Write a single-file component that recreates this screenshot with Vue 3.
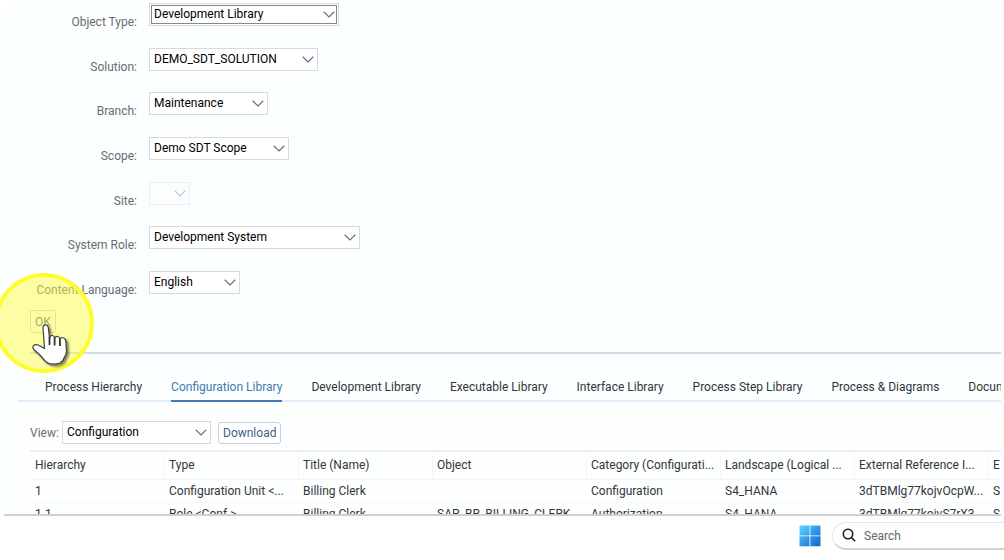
<script setup>
import { ref } from 'vue'

const fields = [
  { id: 'object-type', label: 'Object Type:', value: 'Development Library', width: 190, focused: true },
  { id: 'solution', label: 'Solution:', value: 'DEMO_SDT_SOLUTION', width: 169 },
  { id: 'branch', label: 'Branch:', value: 'Maintenance', width: 119 },
  { id: 'scope', label: 'Scope:', value: 'Demo SDT Scope', width: 140 },
  { id: 'site', label: 'Site:', value: '', width: 41, disabled: true },
  { id: 'system-role', label: 'System Role:', value: 'Development System', width: 211 },
  { id: 'content-language', label: 'Content Language:', value: 'English', width: 91 },
]

const tabs = [
  'Process Hierarchy',
  'Configuration Library',
  'Development Library',
  'Executable Library',
  'Interface Library',
  'Process Step Library',
  'Process & Diagrams',
  'Documents',
]
const activeTab = ref('Configuration Library')

const columns = [
  'Hierarchy',
  'Type',
  'Title (Name)',
  'Object',
  'Category (Configurati...',
  'Landscape (Logical ...',
  'External Reference I...',
  'E',
]
const rows = [
  ['1', 'Configuration Unit <...', 'Billing Clerk', '', 'Configuration', 'S4_HANA', '3dTBMlg77kojvOcpW...', 'S'],
  ['1.1', 'Role <Conf.>', 'Billing Clerk', 'SAP_BR_BILLING_CLERK', 'Authorization', 'S4_HANA', '3dTBMlg77kojvS7rX3...', 'S'],
]
</script>

<template>
  <div class="screen">
    <main class="app">
      <form class="filters" @submit.prevent>
        <div class="fields">
          <div v-for="f in fields" :key="f.id" class="field">
            <label :for="f.id">{{ f.label }}</label>
            <div class="picker" :class="{ focused: f.focused, disabled: f.disabled }" :style="{ width: f.width + 'px' }">
              <select :id="f.id" :disabled="f.disabled">
                <option>{{ f.value }}</option>
              </select>
              <svg class="chevron" viewBox="0 0 12 7" aria-hidden="true"><path d="M.7.8 6 6 11.3.8" /></svg>
            </div>
          </div>
        </div>
        <button class="ok" type="submit">OK</button>
        <div class="click-mark" aria-hidden="true">
          <svg class="hand" viewBox="0 0 38 42">
            <path class="outline" d="M11 4.500Q11.200 1.800 13.500 1.800Q16 1.800 16.300 4.500L17.500 15Q18.500 12 20.500 12.500Q22.300 12.800 22.600 15.300Q23.800 12.800 25.800 13.500Q27.600 14 27.900 16.300Q29.500 13.800 31.800 15Q34 16 34 20L34.500 28Q34.500 31 32.500 34Q31.500 38 28 40Q19 43 13.500 38.500L8 32L1.800 26.500Q.2 24.500 1.300 22.800Q3 20.800 6 22L12.500 25.500Z" />
            <path class="line" d="M17.500 14v8M22.600 15v7.500M27.900 16v7" />
          </svg>
        </div>
      </form>

      <section class="library">
        <nav class="tabs">
          <a v-for="t in tabs" :key="t" href="#" :class="{ active: t === activeTab }" @click.prevent="activeTab = t">{{ t }}</a>
        </nav>
        <div class="panel">
          <div class="toolbar">
            <label for="view">View:</label>
            <div class="picker view">
              <select id="view"><option>Configuration</option></select>
              <svg class="chevron" viewBox="0 0 12 7" aria-hidden="true"><path d="M.7.8 6 6 11.3.8" /></svg>
            </div>
            <button class="download" type="button">Download</button>
          </div>
          <table>
            <colgroup>
              <col v-for="(c, i) in columns" :key="c" :class="{ wide: i === 3 }" />
            </colgroup>
            <thead>
              <tr><th v-for="c in columns" :key="c" scope="col">{{ c }}</th></tr>
            </thead>
            <tbody>
              <tr v-for="r in rows" :key="r[0]"><td v-for="(cell, i) in r" :key="i">{{ cell }}</td></tr>
            </tbody>
          </table>
        </div>
      </section>
    </main>

    <footer class="taskbar">
      <button class="start" type="button" aria-label="Start">
        <svg viewBox="0 0 22 22">
          <defs>
            <linearGradient id="tile" x1="0" y1="0" x2="22" y2="22" gradientUnits="userSpaceOnUse">
              <stop offset="0" stop-color="#5fdcff" />
              <stop offset=".5" stop-color="#3299e6" />
              <stop offset="1" stop-color="#1560cf" />
            </linearGradient>
          </defs>
          <path fill="url(#tile)" d="M1 .5h9.500v10H.5V1ZM11.300.5H21l.5.5v9.500H11.300ZM.5 11.300h10v10H1l-.5-.5ZM11.300 11.300h10.200v9.500l-.5.5h-9.700Z" />
        </svg>
      </button>
      <div class="search">
        <svg viewBox="0 0 14 14" aria-hidden="true"><circle cx="6" cy="6" r="4.700" /><path d="m9.500 9.500 3.700 3.700" /></svg>
        <input type="text" placeholder="Search" aria-label="Search" />
      </div>
    </footer>
  </div>
</template>

<style>
body {
  background: #fff;
  overflow: hidden;
}
</style>

<style scoped>
.screen {
  display: flex;
  flex-direction: column;
  height: 100vh;
  box-sizing: border-box;
  padding: 3px 3px 5px 4px;
  overflow: hidden;
  color: #32363a;
  font-family: Roboto, "Liberation Sans", sans-serif;
  font-size: 12px;
  line-height: 16px;
}
button,
select,
input {
  margin: 0;
  font: inherit;
}
.app {
  flex: 1;
  min-height: 0;
  display: flex;
  flex-direction: column;
  background: #fbffff;
  border-bottom: 2px solid #cfcfd2;
  border-top-left-radius: 6px;
}
.filters {
  position: relative;
  flex: none;
  margin-left: 26px;
  padding-bottom: 19px;
  border-bottom: 2px solid #d5d9e1;
}
.fields {
  display: flex;
  flex-direction: column;
  justify-content: space-between;
  min-height: 291px;
}
.field {
  display: grid;
  grid-template-columns: 107px 1fr;
  column-gap: 12px;
}
.field label {
  padding-top: 11px;
  height: 12px;
  text-align: right;
  color: #6a6d70;
}
.picker {
  position: relative;
  height: 23px;
}
.picker select {
  display: block;
  width: 100%;
  height: 100%;
  box-sizing: border-box;
  padding: 0 20px 1px 4px;
  appearance: none;
  border: 1px solid #d9dadd;
  border-radius: 0;
  background: #fff;
  color: #000;
  outline: none;
}
.picker.focused select {
  outline: 1px solid #85888c;
  outline-offset: -3px;
}
.picker.disabled select {
  border-color: #eceef2;
  background: #fcfdff;
  opacity: 1;
}
.chevron {
  position: absolute;
  right: 4px;
  top: 8px;
  width: 12px;
  height: 7px;
  fill: none;
  stroke: #5d7088;
  stroke-width: 1.2;
  pointer-events: none;
}
.disabled .chevron {
  stroke: #c0c7d2;
}
.ok {
  display: block;
  width: 26px;
  height: 23px;
  margin-top: 16px;
  padding: 0;
  border: 1px solid #c9ced8;
  border-radius: 3px;
  background: #fff;
  color: #3f6088;
}
.click-mark {
  position: absolute;
  left: -36px;
  bottom: -21px;
  width: 100px;
  height: 100px;
  box-sizing: border-box;
  border: 4px solid #fdfd2e;
  border-radius: 50%;
  background: rgba(255, 250, 60, 0.47);
  pointer-events: none;
}
.hand {
  position: absolute;
  left: 34px;
  top: 46px;
  width: 38px;
  height: 42px;
  overflow: visible;
  filter: drop-shadow(2px 2px 1px rgba(0, 0, 0, 0.5));
}
.outline {
  fill: #fff;
  stroke: #444;
  stroke-width: 1.2;
}
.line {
  fill: none;
  stroke: #333;
  stroke-width: 1.8;
}
.library {
  flex: 1;
  min-height: 0;
  margin: 16px 0 0 14px;
  overflow: hidden;
}
.tabs {
  display: flex;
  gap: 29px;
  padding-left: 27px;
  border-bottom: 2px solid #e0edfb;
  white-space: nowrap;
}
.tabs a {
  flex: none;
  padding: 9px 0 5px;
  margin-bottom: -2px;
  border-bottom: 2px solid transparent;
  color: #32363a;
  text-decoration: none;
}
.tabs a.active {
  color: #427cac;
  border-color: #427cac;
}
.panel {
  padding-left: 12px;
  background: #fdfefe;
}
.toolbar {
  display: flex;
  align-items: center;
  padding: 19px 0 6px;
}
.toolbar label {
  width: 32px;
  color: #6a6d70;
}
.view {
  width: 149px;
  margin-right: 7px;
}
.download {
  height: 22px;
  padding: 0 4px;
  border: 1px solid #c9ced8;
  border-radius: 3px;
  background: #fff;
  color: #3f6088;
}
table {
  width: 1092px;
  table-layout: fixed;
  border-collapse: separate;
  border-spacing: 0;
  border-top: 2px solid #eeeff0;
}
col {
  width: 134px;
}
col.wide {
  width: 154px;
}
th,
td {
  padding: 3px 4px;
  overflow: hidden;
  border-bottom: 1px solid #f5f6f6;
  font-weight: 400;
  text-align: left;
  text-overflow: ellipsis;
  white-space: nowrap;
}
th {
  padding: 5px 4px 6px;
  border-left: 1px solid #f4f5f5;
}
th:first-child {
  border-left-color: transparent;
}
td {
  border-left: 1px solid transparent;
}
.taskbar {
  flex: none;
  display: flex;
  align-items: center;
  height: 39px;
  padding-left: 795px;
  gap: 11px;
}
.start {
  flex: none;
  width: 22px;
  height: 22px;
  padding: 0;
  border: 0;
  background: none;
}
.start svg {
  display: block;
}
.search {
  flex: 1;
  display: flex;
  align-items: center;
  gap: 8px;
  height: 28px;
  box-sizing: border-box;
  padding-left: 9px;
  border: 1px solid #e7e7e7;
  border-right: 0;
  border-bottom: 2px solid #d2d2d2;
  border-radius: 14px 0 0 14px;
}
.search svg {
  flex: none;
  width: 14px;
  height: 14px;
  fill: none;
  stroke: #1c1c1c;
  stroke-width: 1.6;
}
.search input {
  flex: 1;
  min-width: 0;
  padding: 1px 0 0;
  border: 0;
  background: none;
  outline: none;
}
.search input::placeholder {
  color: #666;
  opacity: 1;
}
</style>
